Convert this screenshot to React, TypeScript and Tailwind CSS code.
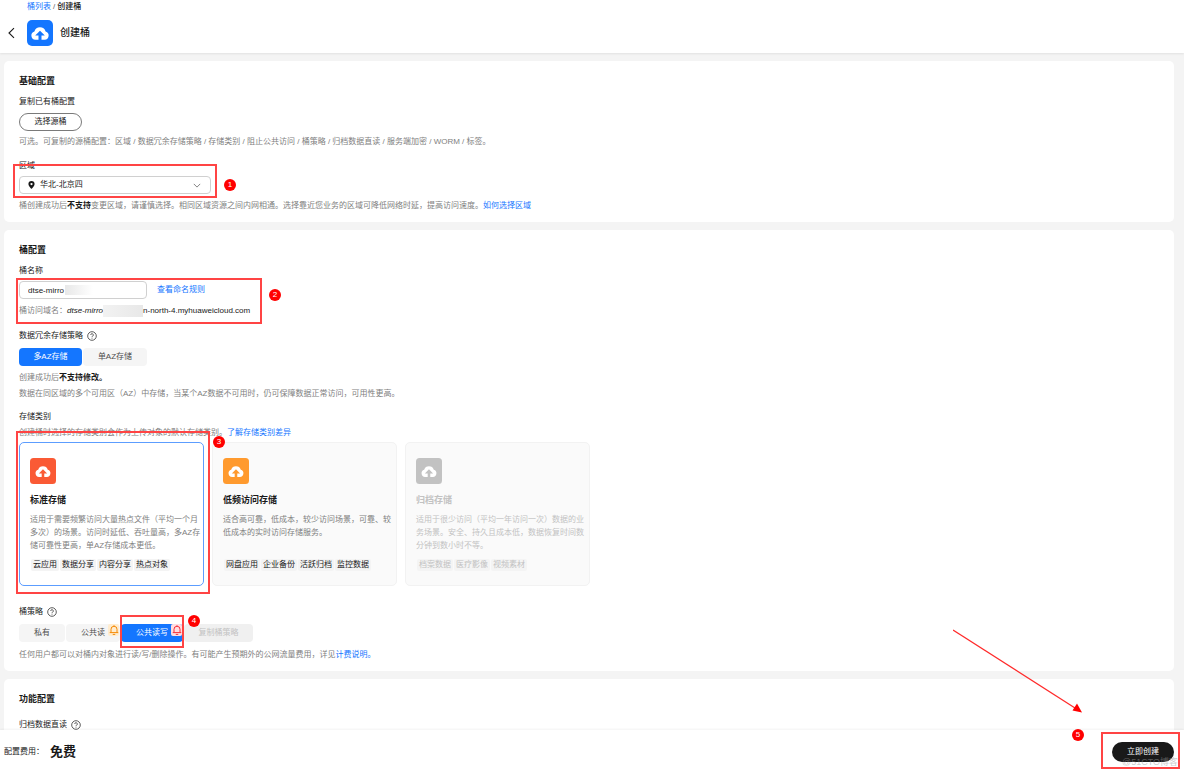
import { useState } from "react";

const HELP = "text-[8px] leading-3 text-[#808080]";
const LABEL = "text-[8px] leading-3 text-[#191919]";
const LINK = "text-[#1476ff] hover:underline";

const storageClasses = [
  {
    id: "standard",
    name: "标准存储",
    color: "#fa5a35",
    desc: "适用于需要频繁访问大量热点文件（平均一个月\n多次）的场景。访问时延低、吞吐量高，多AZ存\n储可靠性更高，单AZ存储成本更低。",
    tags: ["云应用", "数据分享", "内容分享", "热点对象"],
  },
  {
    id: "warm",
    name: "低频访问存储",
    color: "#ff9a2e",
    desc: "适合高可靠，低成本，较少访问场景，可靠、较\n低成本的实时访问存储服务。",
    tags: ["网盘应用", "企业备份", "活跃归档", "监控数据"],
  },
  {
    id: "cold",
    name: "归档存储",
    color: "#c2c2c2",
    disabled: true,
    desc: "适用于很少访问（平均一年访问一次）数据的业\n务场景。安全、持久且成本低，数据恢复时间数\n分钟到数小时不等。",
    tags: ["档案数据", "医疗影像", "视频素材"],
  },
];

function CloudIcon({ color, small }: { color: string; small?: boolean }) {
  return (
    <svg viewBox="0 0 26 26" className="block h-[26px] w-[26px] shrink-0" aria-hidden="true">
      <rect width="26" height="26" rx={small ? 3.5 : 5} fill={color} />
      <g transform={small ? "translate(1.8 2) scale(.86)" : undefined}>
        <path
          d="M8.400 19.800a4.300 4.300 0 0 1-1-8.400 5.900 5.900 0 0 1 11.200 0 4.300 4.300 0 0 1-1 8.400z"
          fill="#fff"
        />
        <path d="M13 10.800l4.800 4.800h-3.300V20h-3v-4.400H8.200z" fill={color} />
      </g>
    </svg>
  );
}

function HelpIcon() {
  return (
    <svg viewBox="0 0 20 20" className="h-[10px] w-[10px]" fill="none" stroke="#333" strokeWidth="1.6" aria-hidden="true">
      <circle cx="10" cy="10" r="8.6" />
      <path d="M7.4 8a2.6 2.6 0 1 1 3.800 2.300c-.8.4-1.200.8-1.200 1.700" />
      <path d="M10 13.4v1.800" />
    </svg>
  );
}

function BellBadge({ danger }: { danger?: boolean }) {
  return (
    <span
      className={`absolute right-[1px] top-0 flex h-3 w-[11px] items-center justify-center rounded-[2px] ${
        danger ? "bg-[#ffdde0] text-[#f5313d]" : "bg-[#ffeccf] text-[#f58a07]"
      }`}
    >
      <svg viewBox="0 0 20 20" className="h-[10px] w-[10px]" fill="none" stroke="currentColor" strokeWidth="2" aria-hidden="true">
        <path d="M4 15V8.500a6 6 0 0 1 12 0V15M1.500 15.200h17M7.500 18.800h5M10 .5v2" />
      </svg>
    </span>
  );
}

function Marker({ n, className }: { n: number; className: string }) {
  return (
    <span
      className={`absolute flex h-3 w-3 items-center justify-center rounded-full bg-[#ff0000] text-[8px] leading-3 text-white ${className}`}
    >
      {n}
    </span>
  );
}

function Frame({ className }: { className: string }) {
  return <span className={`absolute border-2 border-[#ff4444] ${className}`} />;
}

export default function App() {
  const [region, setRegion] = useState("cn-north-4");
  const [bucket, setBucket] = useState("dtse-mirro");
  const [multiAz, setMultiAz] = useState(true);
  const [storage, setStorage] = useState("standard");
  const [policy, setPolicy] = useState("rw");

  const azTab = (active: boolean) =>
    `h-[18px] rounded-[4px] text-[8px] leading-3 ${active ? "bg-[#1476ff] text-white" : "bg-[#f5f5f5] text-[#4d4d4d]"}`;

  return (
    <div className="relative flex h-screen flex-col overflow-hidden bg-[#f4f4f4] font-['Liberation_Sans','Noto_Sans_CJK_SC',sans-serif] text-[#191919]">
      <header className="z-10 bg-white px-[7px] pb-[7px] pt-[1px] shadow-[0_1px_2px_rgba(0,0,0,0.08)]">
        <nav className="pl-5 text-[8px] leading-3">
          <a href="#buckets" className={LINK}>桶列表</a>
          <span className="px-[2px] text-[#666]">/</span>
          <span className="font-medium">创建桶</span>
        </nav>
        <div className="mt-[7px] flex items-center">
          <button type="button" aria-label="返回" className="w-5">
            <svg viewBox="0 0 10 12" className="h-3 w-[10px]" fill="none" stroke="#191919" strokeWidth="1.1" aria-hidden="true">
              <path d="M7 1.2L2 6l5 4.8" />
            </svg>
          </button>
          <CloudIcon color="#1476ff" />
          <h1 className="ml-[7px] text-[10px] font-medium leading-4">创建桶</h1>
        </div>
      </header>

      <main className="flex min-h-0 flex-1 flex-col gap-2 overflow-hidden pl-1 pr-[10px] pt-2">
        <section className="shrink-0 rounded-[5px] bg-white px-[15px] pb-[10px] pt-3">
          <h2 className="text-[9px] font-bold leading-4">基础配置</h2>
          <p className={`mt-[7px] ${LABEL}`}>复制已有桶配置</p>
          <button type="button" className="mt-[5px] block h-[18px] w-[63px] rounded-full border border-[#7a7a7a] text-[8px] leading-3">
            选择源桶
          </button>
          <p className={`mt-[5px] ${HELP}`}>
            可选。可复制的源桶配置：区域 / 数据冗余存储策略 / 存储类别 / 阻止公共访问 / 桶策略 / 归档数据直读 / 服务端加密 / WORM / 标签。
          </p>
          <label htmlFor="region" className={`mt-3 block ${LABEL}`}>区域</label>
          <div className="relative mt-1 w-48">
            <select
              id="region"
              value={region}
              onChange={(e) => setRegion(e.target.value)}
              className="block h-[18px] w-full appearance-none rounded-[4px] border border-[#d0d0d0] bg-white pl-5 text-[8px] leading-3"
            >
              <option value="cn-north-4">华北-北京四</option>
            </select>
            <svg viewBox="0 0 12 14" className="pointer-events-none absolute left-[9px] top-[5px] h-2 w-[7px]" aria-hidden="true">
              <path fill="#191919" fillRule="evenodd" d="M6 0a5.4 5.4 0 0 1 5.4 5.4C11.4 9 6 14 6 14S.6 9 .6 5.4A5.4 5.4 0 0 1 6 0zm0 3.4a2 2 0 1 0 0 4 2 2 0 0 0 0-4z" />
            </svg>
            <svg viewBox="0 0 10 6" className="pointer-events-none absolute right-[10px] top-[7px] h-[5px] w-2" fill="none" stroke="#666" aria-hidden="true">
              <path d="M1 1l4 4 4-4" />
            </svg>
          </div>
          <p className={`mt-[6px] ${HELP}`}>
            桶创建成功后<b className="text-[#191919]">不支持</b>变更区域，请谨慎选择。相同区域资源之间内网相通。选择靠近您业务的区域可降低网络时延，提高访问速度。
            <a href="#region" className={LINK}>如何选择区域</a>
          </p>
        </section>

        <section className="shrink-0 rounded-[5px] bg-white px-[15px] pb-[10px] pt-3">
          <h2 className="text-[9px] font-bold leading-4">桶配置</h2>
          <label htmlFor="bucket" className={`mt-[7px] block ${LABEL}`}>桶名称</label>
          <div className="mt-1 flex items-center gap-[10px]">
            <div className="relative w-32">
              <input
                id="bucket"
                value={bucket}
                onChange={(e) => setBucket(e.target.value)}
                className="block h-[18px] w-full rounded-[4px] border border-[#d0d0d0] bg-white px-2 text-[8px] leading-3"
              />
              <span className="absolute left-[46px] top-1 h-[10px] w-7 bg-linear-to-r from-[#e8e8e8] to-white" />
            </div>
            <a href="#naming" className={`text-[8px] leading-3 ${LINK}`}>查看命名规则</a>
          </div>
          <p className={`mt-[6px] flex items-center ${HELP}`}>
            桶访问域名：
            <i className="text-[#191919]">dtse-mirro</i>
            <span className="h-3 w-10 bg-linear-to-r from-[#f2f2f2] to-[#e8e8e8]" />
            <span className="text-[#191919]">n-north-4.myhuaweicloud.com</span>
          </p>

          <div className={`mt-[13px] flex items-center gap-1 ${LABEL}`}>
            数据冗余存储策略
            <HelpIcon />
          </div>
          <div className="mt-[6px] flex gap-[1px]">
            <button type="button" aria-pressed={multiAz} onClick={() => setMultiAz(true)} className={`w-[63px] ${azTab(multiAz)}`}>
              多AZ存储
            </button>
            <button type="button" aria-pressed={!multiAz} onClick={() => setMultiAz(false)} className={`w-16 ${azTab(!multiAz)}`}>
              单AZ存储
            </button>
          </div>
          <p className={`mt-[6px] ${HELP}`}>
            创建成功后<b className="text-[#191919]">不支持修改。</b>
          </p>
          <p className={`mt-1 ${HELP}`}>
            数据在同区域的多个可用区（AZ）中存储，当某个AZ数据不可用时，仍可保障数据正常访问，可用性更高。
          </p>

          <p className={`mt-[11px] ${LABEL}`}>存储类别</p>
          <p className={`mt-1 ${HELP}`}>
            创建桶时选择的存储类别会作为上传对象的默认存储类别。
            <a href="#classes" className={LINK}>了解存储类别差异</a>
          </p>
          <div className="mt-[3px] flex gap-2">
            {storageClasses.map((s) => (
              <button
                key={s.id}
                type="button"
                disabled={s.disabled}
                aria-pressed={storage === s.id}
                onClick={() => setStorage(s.id)}
                className={`flex w-[185px] flex-col items-start rounded-[5px] border pb-[14px] pl-[10px] pt-[15px] text-left ${
                  storage === s.id ? "border-[#5c9dff] bg-white" : "border-[#f2f2f2] bg-[#fafafa]"
                }`}
              >
                <CloudIcon color={s.color} small />
                <span className={`mt-2 text-[9px] font-bold leading-4 ${s.disabled ? "text-[#c2c2c2]" : ""}`}>{s.name}</span>
                <span className={`mt-[5px] min-h-[39px] whitespace-pre text-[8px] leading-[13px] ${s.disabled ? "text-[#c2c2c2]" : "text-[#808080]"}`}>
                  {s.desc}
                </span>
                <span className="mt-[7px] flex gap-[1px] pl-[1px]">
                  {s.tags.map((t) => (
                    <span
                      key={t}
                      className={`rounded-[2px] bg-[#f4f4f4] px-[2px] text-[8px] leading-3 ${s.disabled ? "text-[#c2c2c2]" : "text-[#191919]"}`}
                    >
                      {t}
                    </span>
                  ))}
                </span>
              </button>
            ))}
          </div>

          <div className={`mt-5 flex items-center gap-1 ${LABEL}`}>
            桶策略
            <HelpIcon />
          </div>
          <div className="mt-[6px] flex gap-[1px]">
            <button type="button" aria-pressed={policy === "private"} onClick={() => setPolicy("private")} className={`w-[46px] ${azTab(policy === "private")}`}>
              私有
            </button>
            <button type="button" aria-pressed={policy === "read"} onClick={() => setPolicy("read")} className={`relative w-[54px] ${azTab(policy === "read")}`}>
              公共读
              <BellBadge />
            </button>
            <button type="button" aria-pressed={policy === "rw"} onClick={() => setPolicy("rw")} className={`relative w-[62px] ${azTab(policy === "rw")}`}>
              公共读写
              <BellBadge danger />
            </button>
            <button type="button" disabled className="h-[18px] w-[69px] rounded-[4px] bg-[#f0f0f0] text-[8px] leading-3 text-[#c2c2c2]">
              复制桶策略
            </button>
          </div>
          <p className={`mt-[7px] ${HELP}`}>
            任何用户都可以对桶内对象进行读/写/删除操作。有可能产生预期外的公网流量费用，详见
            <a href="#pricing" className={LINK}>计费说明。</a>
          </p>
        </section>

        <section className="shrink-0 rounded-[5px] bg-white px-[15px] pb-[10px] pt-3">
          <h2 className="text-[9px] font-bold leading-4">功能配置</h2>
          <div className={`mt-3 flex items-center gap-1 ${LABEL}`}>
            归档数据直读
            <HelpIcon />
          </div>
        </section>
      </main>

      <footer className="z-10 flex h-[43px] shrink-0 items-center bg-white pl-1 pr-[10px] shadow-[0_-1px_2px_rgba(0,0,0,0.05)]">
        <span className="text-[8px] leading-3">配置费用：</span>
        <strong className="ml-[6px] text-[13px] font-bold leading-5">免费</strong>
        <button type="button" className="ml-auto h-5 w-[62px] rounded-full bg-[#191919] text-[8px] leading-3 text-white">
          立即创建
        </button>
      </footer>

      {/* step annotations drawn over the form */}
      <div className="pointer-events-none absolute inset-0 z-20">
        <Frame className="left-[13px] top-[164px] h-[34px] w-[204px]" />
        <Marker n={1} className="left-[224px] top-[179px]" />
        <Frame className="left-4 top-[278px] h-[46px] w-[246px]" />
        <Marker n={2} className="left-[269px] top-[289px]" />
        <Frame className="left-4 top-[431px] h-[163px] w-[194px]" />
        <Marker n={3} className="left-[213px] top-[436px]" />
        <Frame className="left-[120px] top-[615px] h-[33px] w-16" />
        <Marker n={4} className="left-[188px] top-[615px]" />
        <svg viewBox="0 0 130 84" className="absolute bottom-[60px] right-[101px] h-[84px] w-[130px]" aria-hidden="true">
          <path d="M0 1l122 78" stroke="#ff2a2a" strokeWidth="1.3" />
          <path d="M129 83.500L119.500 81.500l4.500-7z" fill="#ff0000" />
        </svg>
        <Marker n={5} className="bottom-8 right-[100px]" />
        <Frame className="bottom-1 right-1 h-[37px] w-[79px]" />
        <span className="absolute bottom-[5px] right-[6px] text-[9px] leading-3 text-[#999]/50">@51CTO博客</span>
      </div>
    </div>
  );
}
